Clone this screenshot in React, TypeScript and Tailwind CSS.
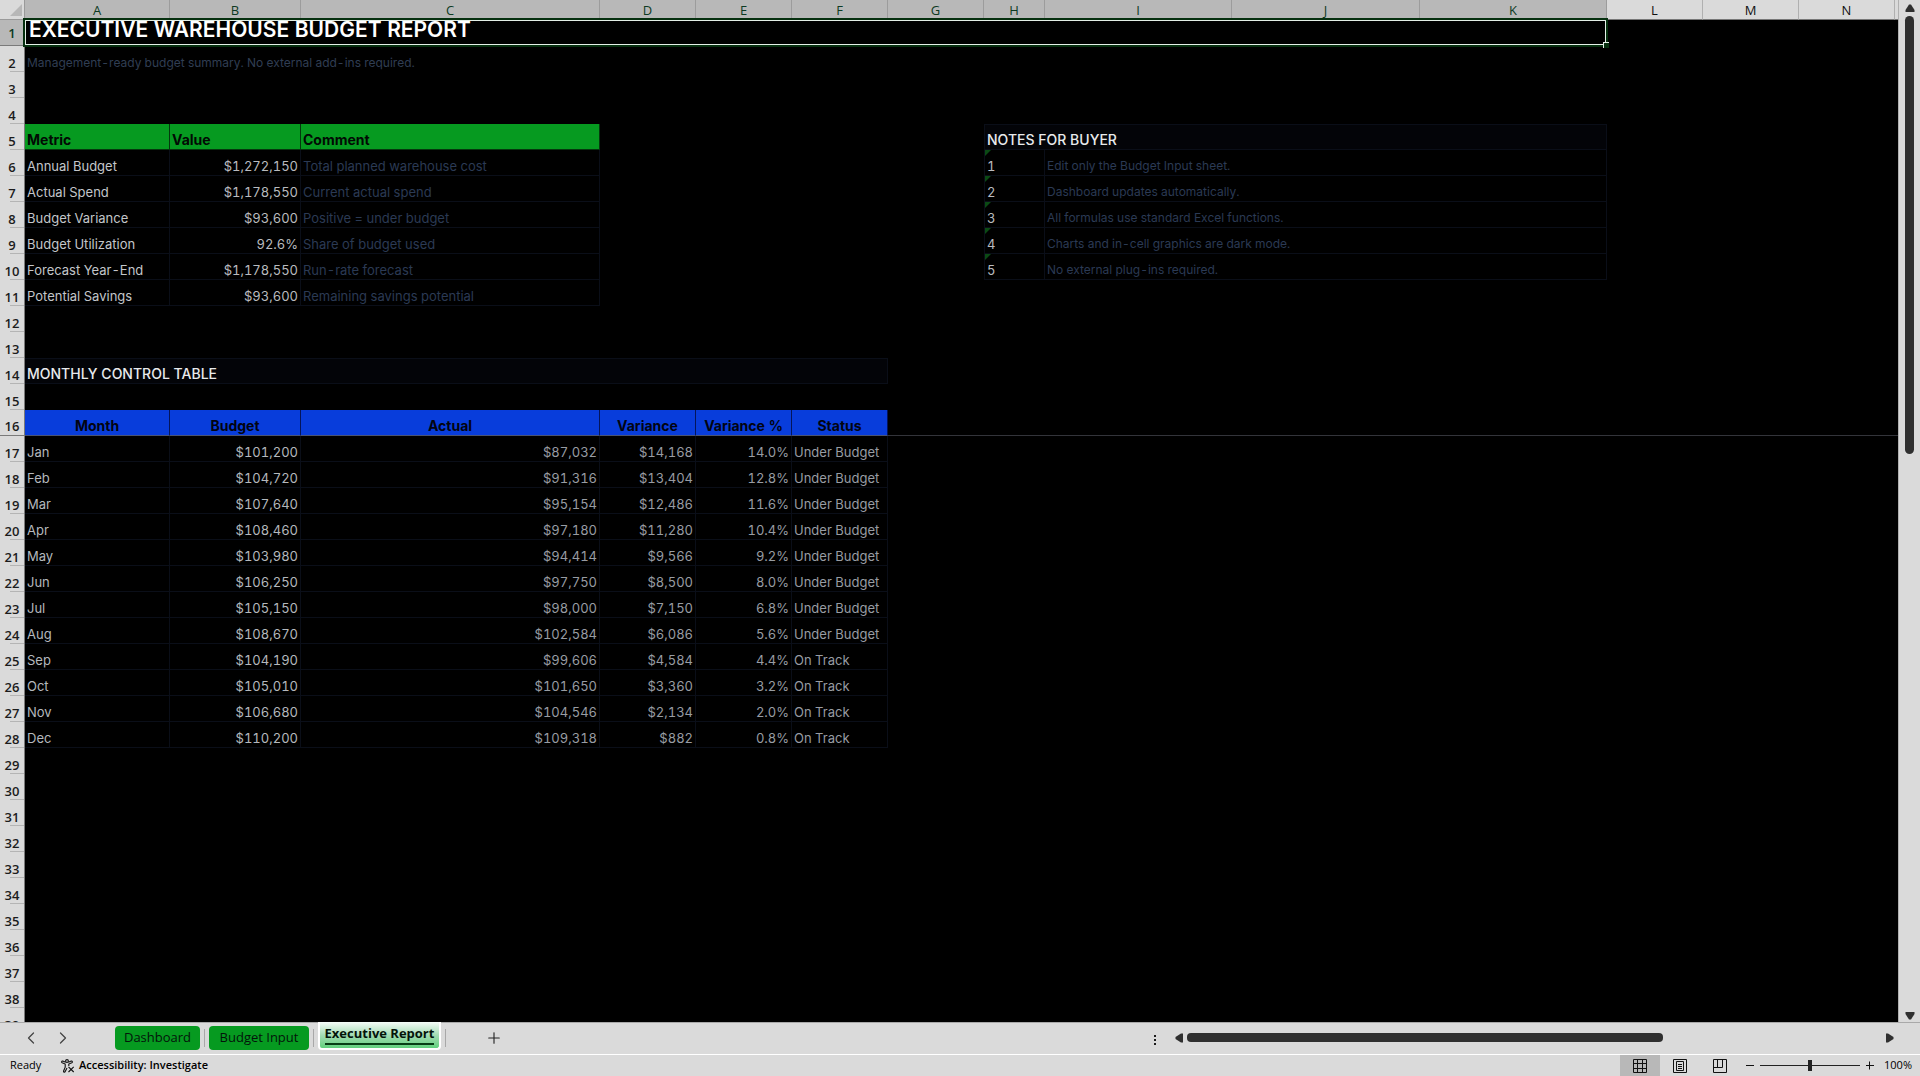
import type { ReactNode } from "react";
import clsx from "clsx";
import { ChevronLeft, ChevronRight, Plus } from "lucide-react";

const columns = [
    { name: "A", width: "w-[145px]" },
    { name: "B", width: "w-[131px]" },
    { name: "C", width: "w-[299px]" },
    { name: "D", width: "w-24" },
    { name: "E", width: "w-24" },
    { name: "F", width: "w-24" },
    { name: "G", width: "w-24" },
    { name: "H", width: "w-[61px]" },
    { name: "I", width: "w-[187px]" },
    { name: "J", width: "w-[188px]" },
    { name: "K", width: "w-[187px]" },
    { name: "L", width: "w-24" },
    { name: "M", width: "w-24" },
    { name: "N", width: "w-24" },
];

const metrics = [
    ["Annual Budget", "$1,272,150", "Total planned warehouse cost"],
    ["Actual Spend", "$1,178,550", "Current actual spend"],
    ["Budget Variance", "$93,600", "Positive = under budget"],
    ["Budget Utilization", "92.6%", "Share of budget used"],
    ["Forecast Year-End", "$1,178,550", "Run-rate forecast"],
    ["Potential Savings", "$93,600", "Remaining savings potential"],
];

const notes = [
    "Edit only the Budget Input sheet.",
    "Dashboard updates automatically.",
    "All formulas use standard Excel functions.",
    "Charts and in-cell graphics are dark mode.",
    "No external plug-ins required.",
];

const months = [
    ["Jan", "$101,200", "$87,032", "$14,168", "14.0%", "Under Budget"],
    ["Feb", "$104,720", "$91,316", "$13,404", "12.8%", "Under Budget"],
    ["Mar", "$107,640", "$95,154", "$12,486", "11.6%", "Under Budget"],
    ["Apr", "$108,460", "$97,180", "$11,280", "10.4%", "Under Budget"],
    ["May", "$103,980", "$94,414", "$9,566", "9.2%", "Under Budget"],
    ["Jun", "$106,250", "$97,750", "$8,500", "8.0%", "Under Budget"],
    ["Jul", "$105,150", "$98,000", "$7,150", "6.8%", "Under Budget"],
    ["Aug", "$108,670", "$102,584", "$6,086", "5.6%", "Under Budget"],
    ["Sep", "$104,190", "$99,606", "$4,584", "4.4%", "On Track"],
    ["Oct", "$105,010", "$101,650", "$3,360", "3.2%", "On Track"],
    ["Nov", "$106,680", "$104,546", "$2,134", "2.0%", "On Track"],
    ["Dec", "$110,200", "$109,318", "$882", "0.8%", "On Track"],
];

const monthHeaders = ["Month", "Budget", "Actual", "Variance", "Variance %", "Status"];

const grid = "border-r border-b border-[#0a0e18]";

function Cell({
    children,
    className,
    span,
}: {
    children?: ReactNode;
    className?: string;
    span?: number;
}) {
    return (
        <td
            colSpan={span}
            className={clsx(
                "relative h-[26px] px-0.5 align-bottom leading-[18px] whitespace-nowrap",
                className,
            )}
        >
            {children}
        </td>
    );
}

function MetricCells({ row }: { row: number }) {
    if (row === 5) {
        return (
            <>
                {["Metric", "Value", "Comment"].map((h) => (
                    <Cell
                        key={h}
                        className="border-r border-b border-[#04380d] bg-[#069a20] text-sm leading-[18px] font-bold text-[#020a04]"
                    >
                        {h}
                    </Cell>
                ))}
            </>
        );
    }
    const metric = metrics[row - 6];
    return (
        <>
            <Cell className={clsx(grid, "text-[#c3c6ca]")}>{metric[0]}</Cell>
            <Cell className={clsx(grid, "text-right text-[#b9bbbf]")}>{metric[1]}</Cell>
            <Cell className={clsx(grid, "text-[#2b3a54]")}>{metric[2]}</Cell>
        </>
    );
}

function NoteCells({ row }: { row: number }) {
    if (row === 5) {
        return (
            <Cell
                span={4}
                className="border border-[#0a0e18] bg-[#030408] text-sm leading-[18px] font-medium text-[#e8eaec]"
            >
                NOTES FOR BUYER
            </Cell>
        );
    }
    const note = notes[row - 6];
    if (!note) return <Cell span={4} />;
    return (
        <>
            <Cell className={clsx(grid, "border-l text-[#b9bbbf]")}>
                <svg className="absolute top-0 left-0 h-1.5 w-1.5" viewBox="0 0 6 6">
                    <path d="M0 0h6L0 6z" fill="#0b4a14" />
                </svg>
                {row - 5}
            </Cell>
            <Cell span={3} className={clsx(grid, "text-xs leading-[18px] text-[#2b3a54]")}>
                {note}
            </Cell>
        </>
    );
}

function RowCells({ row }: { row: number }) {
    if (row === 1) {
        return (
            <>
                <td colSpan={11} className="relative h-[26px] p-0">
                    <h1 className="-mt-1.5 pl-1 text-[21px] leading-5 font-semibold text-white">
                        EXECUTIVE WAREHOUSE BUDGET REPORT
                    </h1>
                    <div className="absolute -top-0.5 -right-px -bottom-px -left-0.5 border-2 border-[#06300f]">
                        <div className="h-full border border-[#e4efe7]" />
                    </div>
                    <div className="absolute -right-0.5 -bottom-0.5 h-1.5 w-1.5 border-t border-l border-[#e4efe7] bg-[#06300f]" />
                </td>
                <Cell span={4} />
            </>
        );
    }
    if (row === 2) {
        return (
            <>
                <Cell span={11} className="text-xs leading-[18px] text-[#303e53]">
                    Management-ready budget summary. No external add-ins required.
                </Cell>
                <Cell span={4} />
            </>
        );
    }
    if (row >= 5 && row <= 11) {
        return (
            <>
                <MetricCells row={row} />
                <Cell span={4} />
                <NoteCells row={row} />
                <Cell span={4} />
            </>
        );
    }
    if (row === 14) {
        return (
            <>
                <Cell
                    span={6}
                    className="border border-l-0 border-[#0a0e18] bg-[#030408] text-sm leading-[18px] font-medium text-[#e8eaec]"
                >
                    MONTHLY CONTROL TABLE
                </Cell>
                <Cell span={9} />
            </>
        );
    }
    if (row === 16) {
        return (
            <>
                {monthHeaders.map((h) => (
                    <Cell
                        key={h}
                        className="border-r border-b border-r-[#04155a] border-b-[#4a5474] bg-[#083ddb] text-center text-sm leading-[18px] font-bold text-[#020410]"
                    >
                        {h}
                    </Cell>
                ))}
                <Cell span={9} className="border-b border-[#33343a]" />
            </>
        );
    }
    if (row >= 17 && row <= 28) {
        return (
            <>
                {months[row - 17].map((value, i) => (
                    <Cell
                        key={i}
                        className={clsx(
                            grid,
                            i > 0 && i < 5 && "text-right",
                            i < 2 ? "text-[#b4b8bd]" : "text-[#989ca3]",
                        )}
                    >
                        {value}
                    </Cell>
                ))}
                <Cell span={9} />
            </>
        );
    }
    return <Cell span={15} />;
}

function Sheet() {
    return (
        <table className="w-full table-fixed border-separate border-spacing-0 bg-black font-['Inter',sans-serif] text-[13px] tabular-nums">
            <thead className="font-['Open_Sans','Noto_Sans',sans-serif] text-[13px] leading-4">
                <tr>
                    <th className="h-5 w-[25px] border-r border-b border-[#9a9a9a] bg-[#dadada] p-0">
                        <svg className="ml-2.5 h-3 w-3" viewBox="0 0 12 12">
                            <path d="M12 0v12H0z" fill="#b7b7b7" />
                        </svg>
                    </th>
                    {columns.map((col, i) => (
                        <th
                            key={col.name}
                            scope="col"
                            className={clsx(
                                "h-5 border-r border-b p-0 font-medium",
                                col.width,
                                i < 11
                                    ? "border-[#9c9c9c] bg-[#b8b8b8] text-[#0d3a22]"
                                    : "border-[#b0b0b0] border-b-[#777777] bg-[#dadada] text-[#111111]",
                            )}
                        >
                            {col.name}
                        </th>
                    ))}
                    <th className="h-5 border-b border-[#777777] bg-[#dadada] p-0" />
                </tr>
            </thead>
            <tbody>
                {Array.from({ length: 39 }, (_, i) => i + 1).map((row) => (
                    <tr key={row}>
                        <th
                            scope="row"
                            className={clsx(
                                "h-[26px] border-r border-[#7a7a7a] p-0 text-center font-['Open_Sans','Noto_Sans',sans-serif] text-[13px] leading-[18px] font-semibold",
                                row === 1
                                    ? "border-b bg-[#b8b8b8] align-middle text-[#0d3a22]"
                                    : "bg-[#dadada] align-bottom text-[#1c1c1c]",
                                row === 16 && "border-b",
                                row !== 1 &&
                                    row !== 16 &&
                                    "bg-[linear-gradient(to_right,transparent_10px,#b4b4b4_10px)] bg-[length:100%_1px] bg-bottom bg-no-repeat",
                            )}
                        >
                            {row}
                        </th>
                        <RowCells row={row} />
                    </tr>
                ))}
            </tbody>
        </table>
    );
}

function VerticalScroll() {
    return (
        <div className="flex w-[22px] shrink-0 flex-col items-center border-l border-[#b0b0b0] bg-[#dadada] pt-1 pb-0.5">
            <button aria-label="Scroll up">
                <svg className="h-2 w-2.5" viewBox="0 0 10 8">
                    <path d="M4 .5h2L9.5 6v2h-9V6z" fill="#2f2f2f" />
                </svg>
            </button>
            <div className="mt-1 flex w-full flex-1 flex-col items-center">
                <div className="h-[44%] w-[9px] rounded-full bg-[#2f2f2f]" />
            </div>
            <button aria-label="Scroll down">
                <svg className="h-2 w-2.5" viewBox="0 0 10 8">
                    <path d="M4 7.5h2L9.5 2V0h-9v2z" fill="#2f2f2f" />
                </svg>
            </button>
        </div>
    );
}

function TabBar() {
    return (
        <div className="flex h-8 shrink-0 items-center border-t border-[#a9a9a9] bg-[#dadada] pb-0.5">
            <div className="flex w-[115px] gap-3 pl-[21px]">
                <button aria-label="Previous sheet">
                    <ChevronLeft size={20} strokeWidth={1.5} color="#444444" />
                </button>
                <button aria-label="Next sheet">
                    <ChevronRight size={20} strokeWidth={1.5} color="#444444" />
                </button>
            </div>
            <nav className="flex items-center gap-1 text-[13px] text-[#04140a]">
                <button className="h-6 w-[85px] rounded bg-[#069a20] font-medium">
                    Dashboard
                </button>
                <span className="h-[18px] w-px bg-[#a8a8a8]" />
                <button className="h-6 w-[100px] rounded bg-[#069a20] font-medium">
                    Budget Input
                </button>
                <span className="h-[18px] w-px bg-[#a8a8a8]" />
                <button className="mb-1 h-7 w-[123px] rounded-b border-2 border-t-0 border-white bg-linear-to-b from-[#f6fdf9] via-[#a3dcb4] to-[#5fd07c] font-bold">
                    <span className="inline-block border-b-2 border-[#063d14]">
                        Executive Report
                    </span>
                </button>
                <span className="h-[18px] w-px bg-[#a8a8a8]" />
            </nav>
            <button aria-label="New sheet" className="ml-[39px]">
                <Plus size={18} strokeWidth={1.5} color="#222222" />
            </button>
            <div className="ml-auto flex w-[767px] items-center pr-[26px]">
                <svg className="mt-1 h-3 w-1" viewBox="0 0 4 12">
                    <path d="M1 1h2v2H1zM1 5h2v2H1zM1 9h2v2H1z" fill="#1c1c1c" />
                </svg>
                <button aria-label="Scroll left" className="ml-[18px]">
                    <svg className="h-2.5 w-2" viewBox="0 0 8 10">
                        <path d="M.5 4v2L6 9.5h2v-9H6z" fill="#2f2f2f" />
                    </svg>
                </button>
                <div className="mx-1 flex-1">
                    <div className="h-[9px] w-[68.5%] rounded bg-[#2f2f2f]" />
                </div>
                <button aria-label="Scroll right">
                    <svg className="h-2.5 w-2" viewBox="0 0 8 10">
                        <path d="M7.5 4v2L2 9.5H0v-9h2z" fill="#2f2f2f" />
                    </svg>
                </button>
            </div>
        </div>
    );
}

function StatusBar() {
    return (
        <footer className="flex h-[22px] shrink-0 items-center border-t border-white bg-[#dadada] text-[11px] text-black">
            <span className="w-[61px] pl-2.5 font-medium">Ready</span>
            <button className="flex items-center gap-1 font-semibold">
                <svg
                    className="h-3.5 w-3.5"
                    viewBox="0 0 14 14"
                    fill="none"
                    stroke="#111111"
                    strokeWidth="1.1"
                >
                    <circle cx="6" cy="2" r="1.4" />
                    <path d="M4.6 3.2 1.8 2.1C.6 1.8.2 3.2 1.2 3.7l3 1.4v3L2.6 12c-.3 1.2 1.1 1.6 1.6.6L6 9M7.4 3.2l2.8-1.1c1.2-.3 1.6 1.1.6 1.6l-3 1.4v2" />
                    <path d="m7.5 7.8 5.2 5.2M12.7 7.8 7.5 13" />
                </svg>
                Accessibility: Investigate
            </button>
            <div className="ml-auto flex h-full items-center">
                <button
                    aria-label="Normal"
                    className="flex h-full w-10 items-center justify-center bg-[#b8b8b8]"
                >
                    <svg className="h-3.5 w-3.5" viewBox="0 0 14 14" fill="none" stroke="#111111">
                        <path d="M.5.5h13v13H.5zM.5 4.5h13M.5 9.5h13M4.5.5v13M9.5.5v13" />
                    </svg>
                </button>
                <button
                    aria-label="Page Layout"
                    className="flex h-full w-10 items-center justify-center"
                >
                    <svg className="h-3.5 w-3.5" viewBox="0 0 14 14" fill="none" stroke="#111111">
                        <path d="M.5.5h13v13H.5zM3.5 2.5h7v9h-7zM5 5.5h4M5 7.5h4M5 9.5h4" />
                    </svg>
                </button>
                <button
                    aria-label="Page Break Preview"
                    className="flex h-full w-10 items-center justify-center"
                >
                    <svg className="h-3.5 w-3.5" viewBox="0 0 14 14" fill="none" stroke="#111111">
                        <path d="M.5.5h13v13H.5zM.5 8.5h9v-8M4.5.5v8" />
                    </svg>
                </button>
                <button aria-label="Zoom out" className="ml-1 w-3">
                    <svg className="h-3 w-3" viewBox="0 0 12 12" stroke="#111111">
                        <path d="M2 5.5h8" />
                    </svg>
                </button>
                <input
                    type="range"
                    aria-label="Zoom"
                    min={10}
                    max={190}
                    defaultValue={100}
                    className="mx-1 h-3 w-[100px] appearance-none bg-[linear-gradient(#222,#222)] bg-[length:100%_1px] bg-center bg-no-repeat [&::-webkit-slider-thumb]:h-[11px] [&::-webkit-slider-thumb]:w-1 [&::-webkit-slider-thumb]:appearance-none [&::-webkit-slider-thumb]:bg-[#222222]"
                />
                <button aria-label="Zoom in" className="w-3">
                    <svg className="h-3 w-3" viewBox="0 0 12 12" stroke="#111111">
                        <path d="M2 5.5h8M5.5 1.5v8" />
                    </svg>
                </button>
                <span className="w-11 pr-2 text-right font-medium">100%</span>
            </div>
        </footer>
    );
}

export default function App() {
    return (
        <div className="flex h-screen flex-col overflow-hidden bg-[#dadada] font-['Open_Sans','Noto_Sans',sans-serif]">
            <main className="flex min-h-0 flex-1">
                <div className="min-w-0 flex-1 overflow-hidden bg-black">
                    <Sheet />
                </div>
                <VerticalScroll />
            </main>
            <TabBar />
            <StatusBar />
        </div>
    );
}
